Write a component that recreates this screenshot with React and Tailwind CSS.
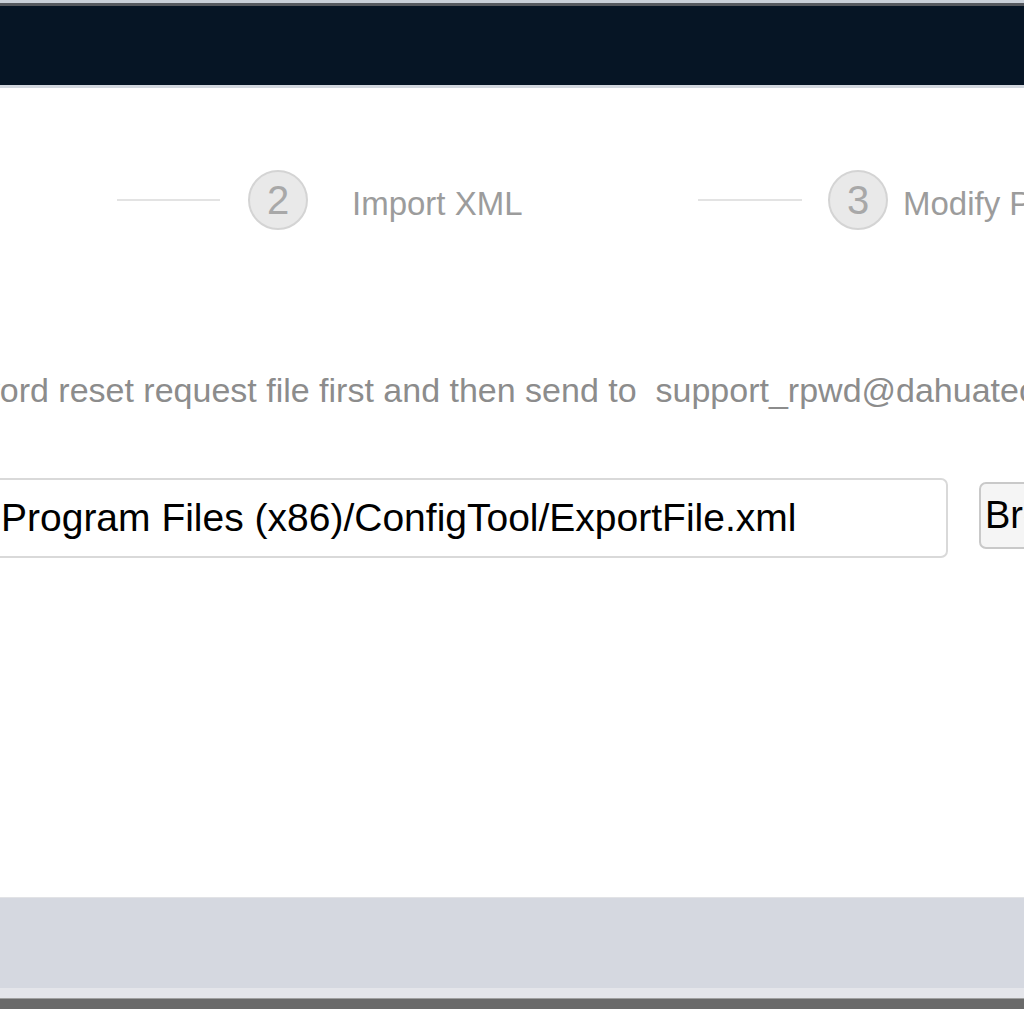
import React from 'react';

const font = { fontFamily: '"Liberation Sans", Arial, sans-serif' };

function StepCircle({ n }) {
  return (
    <div className="w-[60px] h-[60px] shrink-0 rounded-full border-2 border-[#d4d4d4] bg-[#e9e9e9] flex items-center justify-center text-[40px] leading-none text-[#a8a8a8]">
      {n}
    </div>
  );
}

export default function App() {
  return (
    <div className="w-[1024px] h-[1024px] overflow-hidden bg-white flex flex-col" style={font}>
      {/* window title bar */}
      <div className="h-[3px] bg-[#c9d0d9] shrink-0" />
      <div className="h-[3px] bg-[#55595f] shrink-0" />
      <div className="h-[79px] bg-[#061525] shrink-0" />
      <div className="h-[3px] bg-[#d2d7de] shrink-0" />

      {/* body */}
      <div className="flex-1 flex flex-col overflow-hidden">
        {/* steps */}
        <div className="mt-[82px] h-[60px] flex items-center whitespace-nowrap">
          <div className="ml-[117px] w-[103px] h-[2px] bg-[#e3e3e3] shrink-0" />
          <div className="ml-[28px]">
            <StepCircle n="2" />
          </div>
          <div className="ml-[44px] mt-[6px] w-[346px] shrink-0 text-[33px] text-[#9c9c9c] leading-none">Import XML</div>
          <div className="w-[104px] h-[2px] bg-[#e3e3e3] shrink-0" />
          <div className="ml-[26px]">
            <StepCircle n="3" />
          </div>
          <div className="ml-[15px] mt-[6px] text-[33px] text-[#9c9c9c] leading-none">Modify Password</div>
        </div>

        {/* hint */}
        <div className="mt-[140px] -ml-[314px] whitespace-nowrap text-[34px] leading-[40px] text-[#8c8c8c]">
          Please export password reset request file first and then send to&nbsp; support_rpwd@dahuatech.com
        </div>

        {/* file path */}
        <div className="mt-[68px] flex items-start whitespace-nowrap">
          <div className="-ml-[12px] w-[960px] h-[80px] shrink-0 rounded-[7px] border-2 border-[#d9d9d9] flex items-center pl-[11px] text-[39px] text-black">
            Program Files (x86)/ConfigTool/ExportFile.xml
          </div>
          <button
            type="button"
            className="ml-[31px] mt-[4px] h-[67px] w-[140px] shrink-0 rounded-[7px] border-2 border-[#c9c9c9] bg-[#f5f5f5] text-left pl-[4px] text-[38px] text-black"
          >
            Browse
          </button>
        </div>
      </div>

      {/* footer */}
      <div className="h-[91px] shrink-0 bg-[#d5d8e0] border-t border-[#e2e3e6]" />
      <div className="h-[10px] shrink-0 bg-[#e4e5ea]" />
      <div className="h-[11px] shrink-0 bg-[#6a6a6a] border-t border-[#a0a0a0]" />
      <div className="h-[15px] shrink-0 bg-white" />
    </div>
  );
}
